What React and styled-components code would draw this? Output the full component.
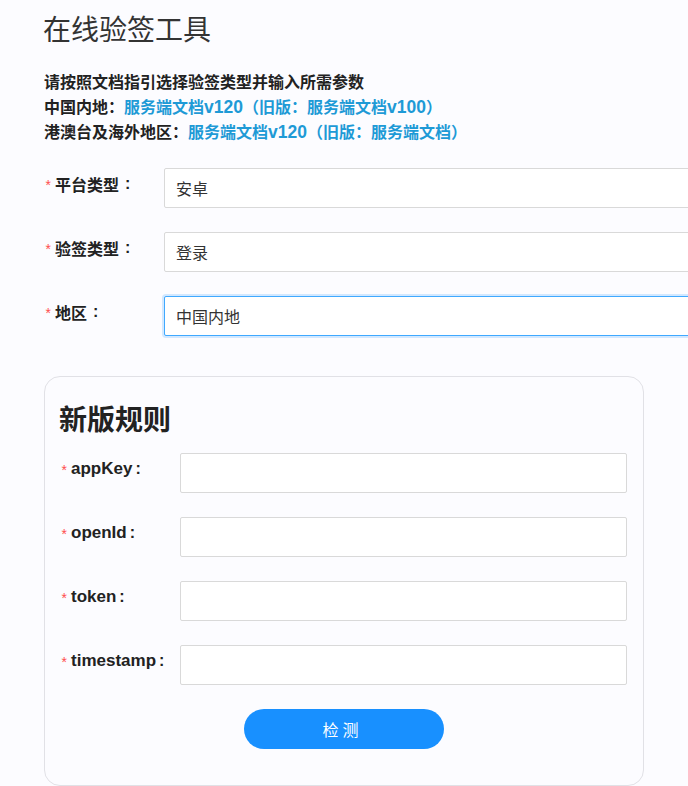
import React from "react";
import styled, { createGlobalStyle } from "styled-components";

const Global = createGlobalStyle`
  html, body { margin: 0; padding: 0; background: #fcfcff; }
  body { font-family: "Liberation Sans", "Noto Sans CJK SC", sans-serif; color: #333; overflow: hidden; }
  * { box-sizing: border-box; }
`;

const Page = styled.div`
  width: 688px;
  height: 786px;
  overflow: hidden;
  padding: 8px 0 0 44px;
`;

const Title = styled.h1`
  margin: 0 0 0 -1px;
  font-family: "Noto Sans CJK SC", sans-serif;
  font-weight: 400;
  font-size: 28px;
  line-height: 40px;
  color: #333;
`;

const Intro = styled.div`
  margin-top: 22px;
  font-family: "Liberation Sans", "Noto Sans CJK SC", sans-serif;
  font-weight: 700;
  font-size: 16px;
  line-height: 25px;
  color: #222;
`;

const Link = styled.a`
  color: #1e9ad6;
  text-decoration: none;
`;

const Latin = styled.span`
  font-size: ${(p) => p.$size || 17.5}px;
`;

const Form = styled.div`
  margin-top: 23px;
  display: flex;
  flex-direction: column;
  gap: 24px;
  width: 700px;
`;

const Row = styled.div`
  display: grid;
  grid-template-columns: ${(p) => p.$labelWidth}px 1fr;
  align-items: start;
`;

const Label = styled.label`
  display: flex;
  align-items: center;
  height: 32px;
  font-family: "Liberation Sans", "Noto Sans CJK SC", sans-serif;
  font-weight: 700;
  font-size: ${(p) => p.$size || 16}px;
  color: #222;
  white-space: nowrap;
`;

const Colon = styled.span`
  margin-left: ${(p) => p.$gap}px;
  font-size: 16px;
`;

const Star = styled.span`
  color: #ff4d4f;
  font-size: 14px;
  font-weight: 400;
  width: 11px;
  margin-top: 6px;
  font-family: "Liberation Mono", monospace;
`;

const Input = styled.div`
  height: 40px;
  border: 1px solid ${(p) => (p.$focus ? "#40a9ff" : "#d9d9d9")};
  box-shadow: ${(p) => (p.$focus ? "0 0 0 2px rgba(24,144,255,0.18)" : "none")};
  border-radius: 2px;
  background: #fff;
  padding: 0 11px;
  display: flex;
  align-items: center;
  font-family: "Noto Sans CJK SC", sans-serif;
  font-size: 16px;
  color: #333;
`;

const Card = styled.section`
  margin-top: 40px;
  width: 600px;
  height: 410px;
  border: 1px solid #e1e1e6;
  border-radius: 16px;
  padding: 16px 16px 0 15px;
`;

const CardTitle = styled.h2`
  margin: 0 0 10px -1px;
  font-family: "Noto Sans CJK SC", sans-serif;
  font-weight: 700;
  font-size: 28px;
  line-height: 50px;
  color: #222;
`;

const CardForm = styled.div`
  display: flex;
  flex-direction: column;
  gap: 24px;
`;

const ButtonRow = styled.div`
  display: flex;
  justify-content: center;
  margin-top: 24px;
`;

const Button = styled.button`
  width: 200px;
  height: 40px;
  border: none;
  border-radius: 20px;
  background: #1890ff;
  color: #fff;
  font-family: "Noto Sans CJK SC", sans-serif;
  font-size: 16px;
  letter-spacing: 4px;
  padding-left: 4px;
`;

const mainFields = [
  { label: "平台类型", value: "安卓" },
  { label: "验签类型", value: "登录" },
  { label: "地区", value: "中国内地", focus: true },
];

const ruleFields = ["appKey", "openId", "token", "timestamp"];

export default function App() {
  return (
    <Page>
      <Global />
      <Title>在线验签工具</Title>
      <Intro>
        <div>请按照文档指引选择验签类型并输入所需参数</div>
        <div>
          中国内地：
          <Link>
            服务端文档<Latin>v120</Latin>（旧版：服务端文档<Latin>v100</Latin>）
          </Link>
        </div>
        <div>
          港澳台及海外地区：
          <Link>
            服务端文档<Latin>v120</Latin>（旧版：服务端文档）
          </Link>
        </div>
      </Intro>
      <Form>
        {mainFields.map((f) => (
          <Row key={f.label} $labelWidth={120}>
            <Label>
              <Star>*</Star>
              {f.label}
              <Colon $gap={6}>:</Colon>
            </Label>
            <Input $focus={f.focus}>{f.value}</Input>
          </Row>
        ))}
      </Form>
      <Card>
        <CardTitle>新版规则</CardTitle>
        <CardForm>
          {ruleFields.map((l) => (
            <Row key={l} $labelWidth={120}>
              <Label $size={17}>
                <Star>*</Star>
                {l}
                <Colon $gap={3}>:</Colon>
              </Label>
              <Input />
            </Row>
          ))}
        </CardForm>
        <ButtonRow>
          <Button>检测</Button>
        </ButtonRow>
      </Card>
    </Page>
  );
}
